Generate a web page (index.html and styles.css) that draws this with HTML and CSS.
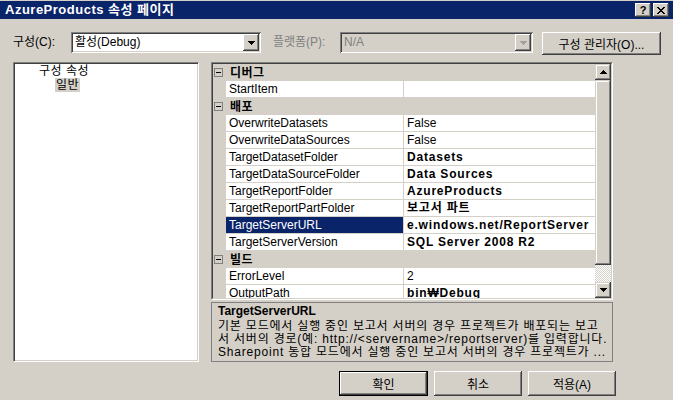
FILE: index.html
```html
<!DOCTYPE html>
<html lang="ko">
<head>
<meta charset="utf-8">
<title>AzureProducts 속성 페이지</title>
<link rel="stylesheet" href="styles.css">
</head>
<body>
<div class="win">
  <div class="titlebar">
    <span class="title">AzureProducts 속성 페이지</span>
    <div class="tbtns">
      <span class="tbtn help">?</span>
      <span class="tbtn close"><svg width="8" height="7" viewBox="0 0 8 7" shape-rendering="crispEdges"><path d="M0 0h2v1h1v1h2v-1h1v-1h2v1h-1v1h-1v1h-1v1h1v1h1v1h1v1h-2v-1h-1v-1h-2v1h-1v1h-2v-1h1v-1h1v-1h1v-1h-1v-1h-1v-1h-1z"/></svg></span>
    </div>
  </div>

  <div class="toolbar">
    <span class="lbl lbl-cfg">구성(C):</span>
    <div class="combo combo-cfg">
      <span class="ctext">활성(Debug)</span>
      <span class="dd"><svg class="tri" width="7" height="4" viewBox="0 0 7 4" shape-rendering="crispEdges"><path d="M0 0h7v1h-1v1h-1v1h-1v1h-1v-1h-1v-1h-1v-1h-1z"/></svg></span>
    </div>
    <span class="lbl lbl-plat">플랫폼(P):</span>
    <div class="combo combo-plat">
      <span class="ctext">N/A</span>
      <span class="dd"><svg class="tri" width="7" height="4" viewBox="0 0 7 4" shape-rendering="crispEdges"><path d="M0 0h7v1h-1v1h-1v1h-1v1h-1v-1h-1v-1h-1v-1h-1z"/></svg></span>
    </div>
    <button class="btn btn-mgr">구성 관리자(O)...</button>
  </div>

  <div class="main">
    <div class="tree">
      <div class="node n1">구성 속성</div>
      <div class="node n2"><span class="sel">일반</span></div>
    </div>

    <div class="right">
      <div class="grid">
        <div class="grid-in">
          <div class="rows">
            <div class="cat"><span class="box"><i></i></span><span class="ctitle">디버그</span></div>
            <div class="row"><span class="gut"></span><span class="name">StartItem</span><span class="val"></span></div>
            <div class="cat"><span class="box"><i></i></span><span class="ctitle">배포</span></div>
            <div class="row"><span class="gut"></span><span class="name">OverwriteDatasets</span><span class="val">False</span></div>
            <div class="row"><span class="gut"></span><span class="name">OverwriteDataSources</span><span class="val">False</span></div>
            <div class="row"><span class="gut"></span><span class="name">TargetDatasetFolder</span><span class="val b">Datasets</span></div>
            <div class="row"><span class="gut"></span><span class="name">TargetDataSourceFolder</span><span class="val b">Data Sources</span></div>
            <div class="row"><span class="gut"></span><span class="name">TargetReportFolder</span><span class="val b">AzureProducts</span></div>
            <div class="row"><span class="gut"></span><span class="name">TargetReportPartFolder</span><span class="val b">보고서 파트</span></div>
            <div class="row selrow"><span class="gut"></span><span class="name">TargetServerURL</span><span class="val b edit">e.windows.net/ReportServer</span></div>
            <div class="row"><span class="gut"></span><span class="name">TargetServerVersion</span><span class="val b">SQL Server 2008 R2</span></div>
            <div class="cat"><span class="box"><i></i></span><span class="ctitle">빌드</span></div>
            <div class="row"><span class="gut"></span><span class="name">ErrorLevel</span><span class="val">2</span></div>
            <div class="row"><span class="gut"></span><span class="name">OutputPath</span><span class="val b">bin₩Debug</span></div>
          </div>
          <div class="vscroll">
            <span class="sbbtn"><svg width="7" height="4" viewBox="0 0 7 4" shape-rendering="crispEdges"><path d="M3 0h1v1h1v1h1v1h1v1h-7v-1h1v-1h1v-1h1z"/></svg></span>
            <span class="thumb"></span>
            <span class="track"></span>
            <span class="sbbtn"><svg width="7" height="4" viewBox="0 0 7 4" shape-rendering="crispEdges"><path d="M0 0h7v1h-1v1h-1v1h-1v1h-1v-1h-1v-1h-1v-1h-1z"/></svg></span>
          </div>
        </div>
      </div>

      <div class="desc">
        <div class="dtitle">TargetServerURL</div>
        <div class="dline">기본 모드에서 실행 중인 보고서 서버의 경우 프로젝트가 배포되는 보고</div>
        <div class="dline">서 서버의 경로(예: http://&lt;servername&gt;/reportserver)를 입력합니다.</div>
        <div class="dline">Sharepoint 통합 모드에서 실행 중인 보고서 서버의 경우 프로젝트가 ...</div>
      </div>
    </div>
  </div>

  <div class="footer">
    <button class="btn btn-ok">확인</button>
    <button class="btn btn-cancel">취소</button>
    <button class="btn btn-apply">적용(A)</button>
  </div>
</div>
</body>
</html>
```

FILE: styles.css
```css
* { box-sizing: border-box; margin: 0; padding: 0; }

html, body { width: 673px; height: 400px; overflow: hidden; }

body {
  background: #d4d0c8;
  font-family: "Liberation Sans", "Noto Sans CJK KR", sans-serif;
  font-size: 12px;
  color: #000;
}

.win { height: 400px; padding-top: 1px; }

/* title bar */
.titlebar {
  height: 18px;
  background: #0a246a;
  display: flex;
  align-items: center;
  justify-content: space-between;
  padding: 0 4px 0 5px;
}
.title {
  color: #fff;
  font-weight: bold;
  font-size: 13px;
  line-height: 18px;
  letter-spacing: 0.5px;
}
.tbtns { display: flex; gap: 2px; }
.tbtn {
  width: 16px;
  height: 14px;
  background: #d4d0c8;
  box-shadow: inset -1px -1px #404040, inset 1px 1px #fff, inset -2px -2px #808080;
  display: flex;
  align-items: center;
  justify-content: center;
  font-weight: bold;
  font-size: 11px;
  line-height: 14px;
}
.tbtn svg { fill: #000; }

/* toolbar */
.toolbar {
  display: flex;
  align-items: flex-start;
  padding-top: 13px;
  height: 36px;
}
.lbl { line-height: 21px; height: 21px; white-space: nowrap; }
.lbl-cfg { margin-left: 13px; width: 58px; }
.lbl-plat { margin-left: 12px; width: 67px; color: #808080; }

.combo {
  height: 21px;
  display: flex;
  align-items: center;
  justify-content: space-between;
  padding: 2px;
  box-shadow: inset 1px 1px #808080, inset -1px -1px #fff, inset 2px 2px #404040, inset -2px -2px #d4d0c8;
}
.combo-cfg { width: 190px; background: #fff; }
.combo-plat { width: 193px; background: #d4d0c8; }
.ctext { padding-left: 2px; line-height: 17px; white-space: nowrap; }
.combo-plat .ctext { color: #808080; }
.dd {
  width: 16px;
  height: 17px;
  background: #d4d0c8;
  box-shadow: inset -1px -1px #404040, inset 1px 1px #fff, inset -2px -2px #808080;
  display: flex;
  align-items: center;
  justify-content: center;
}
.tri { fill: #000; }
.combo-plat .tri { fill: #a0a0a0; }

.btn {
  font-family: "Liberation Sans", "Noto Sans CJK KR", sans-serif;
  font-size: 12px;
  color: #000;
  background: #d4d0c8;
  border: none;
  box-shadow: inset -1px -1px #404040, inset 1px 1px #fff, inset -2px -2px #808080, inset 2px 2px #d4d0c8;
  display: flex;
  align-items: center;
  justify-content: center;
}
.btn-mgr { margin-left: 9px; width: 119px; height: 23px; }

/* main */
.main { display: flex; margin-top: 7px; }

.tree {
  margin-left: 13px;
  width: 186px;
  height: 300px;
  background: #fff;
  border: 1px solid;
  border-color: #808080 #fff #fff #808080;
  box-shadow: inset 1px 1px #404040, inset -1px -1px #d4d0c8;
  padding-top: 1px;
}
.node { line-height: 14px; height: 14px; white-space: nowrap; letter-spacing: 0.5px; }
.n1 { padding-left: 25px; }
.n2 { padding-left: 41px; }
.sel { background: #d4d0c8; padding: 0 1px; display: inline-block; line-height: 14px; }

.right { margin-left: 12px; width: 402px; display: flex; flex-direction: column; }

.grid {
  height: 238px;
  border: 1px solid;
  border-color: #808080 #fff #fff #808080;
}
.grid-in {
  height: 236px;
  border: 1px solid;
  border-color: #404040 #d4d0c8 #d4d0c8 #404040;
  display: flex;
  background: #fff;
}
.rows { flex: 1; overflow: hidden; }

.cat {
  height: 17px;
  background: #d4d0c8;
  display: flex;
  align-items: center;
}
.box {
  width: 9px;
  height: 9px;
  margin-left: 1px;
  border: 1px solid #808080;
  display: flex;
  align-items: center;
  justify-content: center;
}
.box i { display: block; width: 5px; height: 1px; background: #000; }
.ctitle { margin-left: 7px; font-weight: bold; line-height: 16px; letter-spacing: 0.5px; }

.row { height: 17px; display: flex; }
.gut { width: 13px; background: #d4d0c8; }
.name {
  width: 178px;
  padding-left: 3px;
  line-height: 16px;
  border-right: 1px solid #d4d0c8;
  border-bottom: 1px solid #d4d0c8;
  white-space: nowrap;
  overflow: hidden;
}
.val {
  flex: 1;
  padding-left: 3px;
  line-height: 16px;
  border-bottom: 1px solid #d4d0c8;
  white-space: nowrap;
  overflow: hidden;
}
.b { font-weight: bold; letter-spacing: 0.8px; }
.selrow .name { background: #0a246a; color: #fff; }

.vscroll { width: 16px; display: flex; flex-direction: column; }
.sbbtn {
  height: 16px;
  background: #d4d0c8;
  box-shadow: inset -1px -1px #404040, inset 1px 1px #d4d0c8, inset -2px -2px #808080, inset 2px 2px #fff;
  display: flex;
  align-items: center;
  justify-content: center;
}
.sbbtn svg { fill: #000; }
.thumb {
  height: 185px;
  background: #d4d0c8;
  box-shadow: inset -1px -1px #404040, inset 1px 1px #d4d0c8, inset -2px -2px #808080, inset 2px 2px #fff;
}
.track {
  flex: 1;
  background: repeating-conic-gradient(#fff 0 25%, #d4d0c8 0 50%) 0 0 / 2px 2px;
}

.desc {
  margin-top: 2px;
  height: 60px;
  border: 1px solid #808080;
  padding: 1px 6px 0 6px;
  overflow: hidden;
}
.dtitle { font-weight: bold; line-height: 14px; margin-bottom: 2px; }
.dline { line-height: 13px; white-space: nowrap; overflow: hidden; letter-spacing: 0.8px; }

/* footer */
.footer { display: flex; margin-top: 9px; padding-left: 339px; gap: 6px; }
.btn-ok, .btn-cancel, .btn-apply { height: 25px; width: 88px; }
.btn-ok {
  width: 89px;
  box-shadow: inset 0 0 0 1px #000, inset -2px -2px #404040, inset 2px 2px #fff, inset -3px -3px #808080;
}
```
